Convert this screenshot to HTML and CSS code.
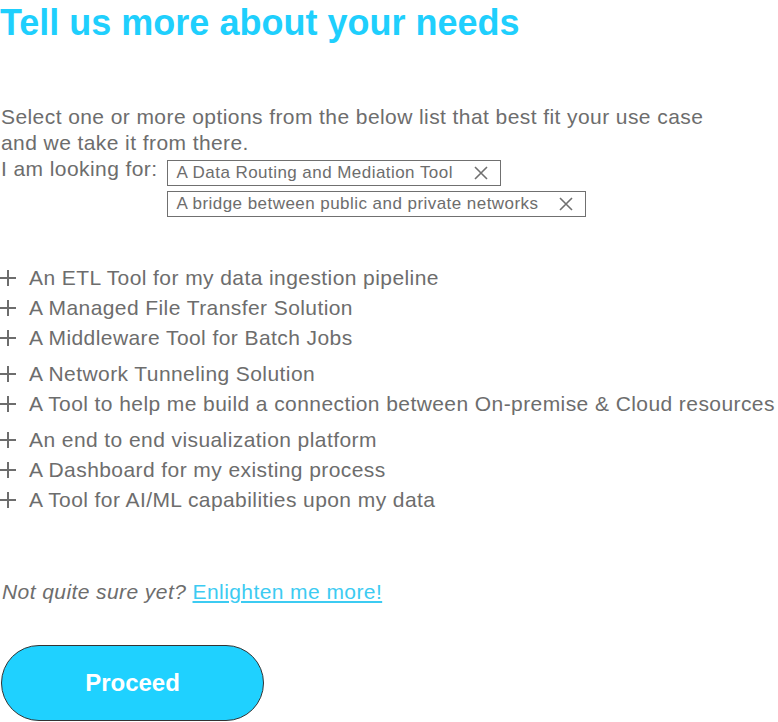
FILE: index.html
```html
<!DOCTYPE html>
<html>
<head>
<meta charset="utf-8">
<link rel="stylesheet" href="styles.css">
</head>
<body>
<h1 class="title">Tell us more about your needs</h1>
<p class="intro">Select one or more options from the below list that best fit your use case<br>and we take it from there.</p>
<div class="looking">
  <span class="looking-label">I am looking for:</span>
  <div class="tags">
    <span class="tag">A Data Routing and Mediation Tool <svg class="x" viewBox="0 0 14 14"><path d="M1 1L13 13M13 1L1 13"/></svg></span>
    <span class="tag">A bridge between public and private networks <svg class="x" viewBox="0 0 14 14"><path d="M1 1L13 13M13 1L1 13"/></svg></span>
  </div>
</div>
<div class="options">
  <ul class="group">
    <li><svg class="plus" viewBox="0 0 16 16"><path d="M8 0V16M0 8H16"/></svg>An ETL Tool for my data ingestion pipeline</li>
    <li><svg class="plus" viewBox="0 0 16 16"><path d="M8 0V16M0 8H16"/></svg>A Managed File Transfer Solution</li>
    <li><svg class="plus" viewBox="0 0 16 16"><path d="M8 0V16M0 8H16"/></svg>A Middleware Tool for Batch Jobs</li>
  </ul>
  <ul class="group">
    <li><svg class="plus" viewBox="0 0 16 16"><path d="M8 0V16M0 8H16"/></svg>A Network Tunneling Solution</li>
    <li><svg class="plus" viewBox="0 0 16 16"><path d="M8 0V16M0 8H16"/></svg>A Tool to help me build a connection between On-premise &amp; Cloud resources</li>
  </ul>
  <ul class="group">
    <li><svg class="plus" viewBox="0 0 16 16"><path d="M8 0V16M0 8H16"/></svg>An end to end visualization platform</li>
    <li><svg class="plus" viewBox="0 0 16 16"><path d="M8 0V16M0 8H16"/></svg>A Dashboard for my existing process</li>
    <li><svg class="plus" viewBox="0 0 16 16"><path d="M8 0V16M0 8H16"/></svg>A Tool for AI/ML capabilities upon my data</li>
  </ul>
</div>
<p class="unsure"><em>Not quite sure yet?</em> <a href="#" class="more">Enlighten me more!</a></p>
<button class="proceed">Proceed</button>
</body>
</html>
```
FILE: styles.css
```css
html, body {
  margin: 0;
  padding: 0;
  background: #fff;
}
body {
  font-family: "Liberation Sans", Arial, sans-serif;
  color: #6d6d6d;
  width: 778px;
  overflow: hidden;
}
.title {
  margin: 0;
  padding-top: 2px;
  font-size: 36px;
  line-height: 41px;
  font-weight: bold;
  color: #1fcffd;
}
.intro {
  margin: 61px 0 0 1px;
  font-size: 21px;
  line-height: 26px;
  letter-spacing: 0.42px;
  white-space: nowrap;
}
.looking {
  display: flex;
  align-items: flex-start;
  gap: 9px;
  margin-left: 1px;
}
.looking-label {
  font-size: 21px;
  line-height: 26px;
  letter-spacing: 0.42px;
}
.tags {
  display: flex;
  flex-direction: column;
  align-items: flex-start;
  gap: 5px;
  padding-top: 4px;
}
.tag {
  display: inline-flex;
  align-items: center;
  gap: 21px;
  height: 24px;
  padding: 0 12px 0 9px;
  border: 1px solid #707070;
  font-size: 17px;
  letter-spacing: 0.45px;
}
.x {
  width: 14px;
  height: 14px;
  stroke: #707070;
  stroke-width: 1.6;
  fill: none;
}
.options {
  margin-top: 46px;
}
.group {
  list-style: none;
  margin: 0 0 6px;
  padding: 0;
}
.group li {
  display: flex;
  align-items: center;
  height: 30px;
  font-size: 21px;
  letter-spacing: 0.42px;
  gap: 13px;
  white-space: nowrap;
}
.plus {
  width: 16px;
  height: 16px;
  stroke: #6d6d6d;
  stroke-width: 2;
  fill: none;
  flex: none;
}
.unsure {
  margin: 64px 0 0 2px;
  font-size: 21px;
  line-height: 26px;
  letter-spacing: 0.42px;
}
.unsure em {
  font-style: italic;
}
.more {
  color: #3ccbf2;
  text-decoration: underline;
}
.proceed {
  display: block;
  margin: 40px 0 0 1px;
  width: 263px;
  height: 76px;
  border: 1px solid #333;
  border-radius: 38px;
  background: #1fd1ff;
  color: #fff;
  font-family: "Liberation Sans", Arial, sans-serif;
  font-weight: bold;
  font-size: 24px;
}
```
